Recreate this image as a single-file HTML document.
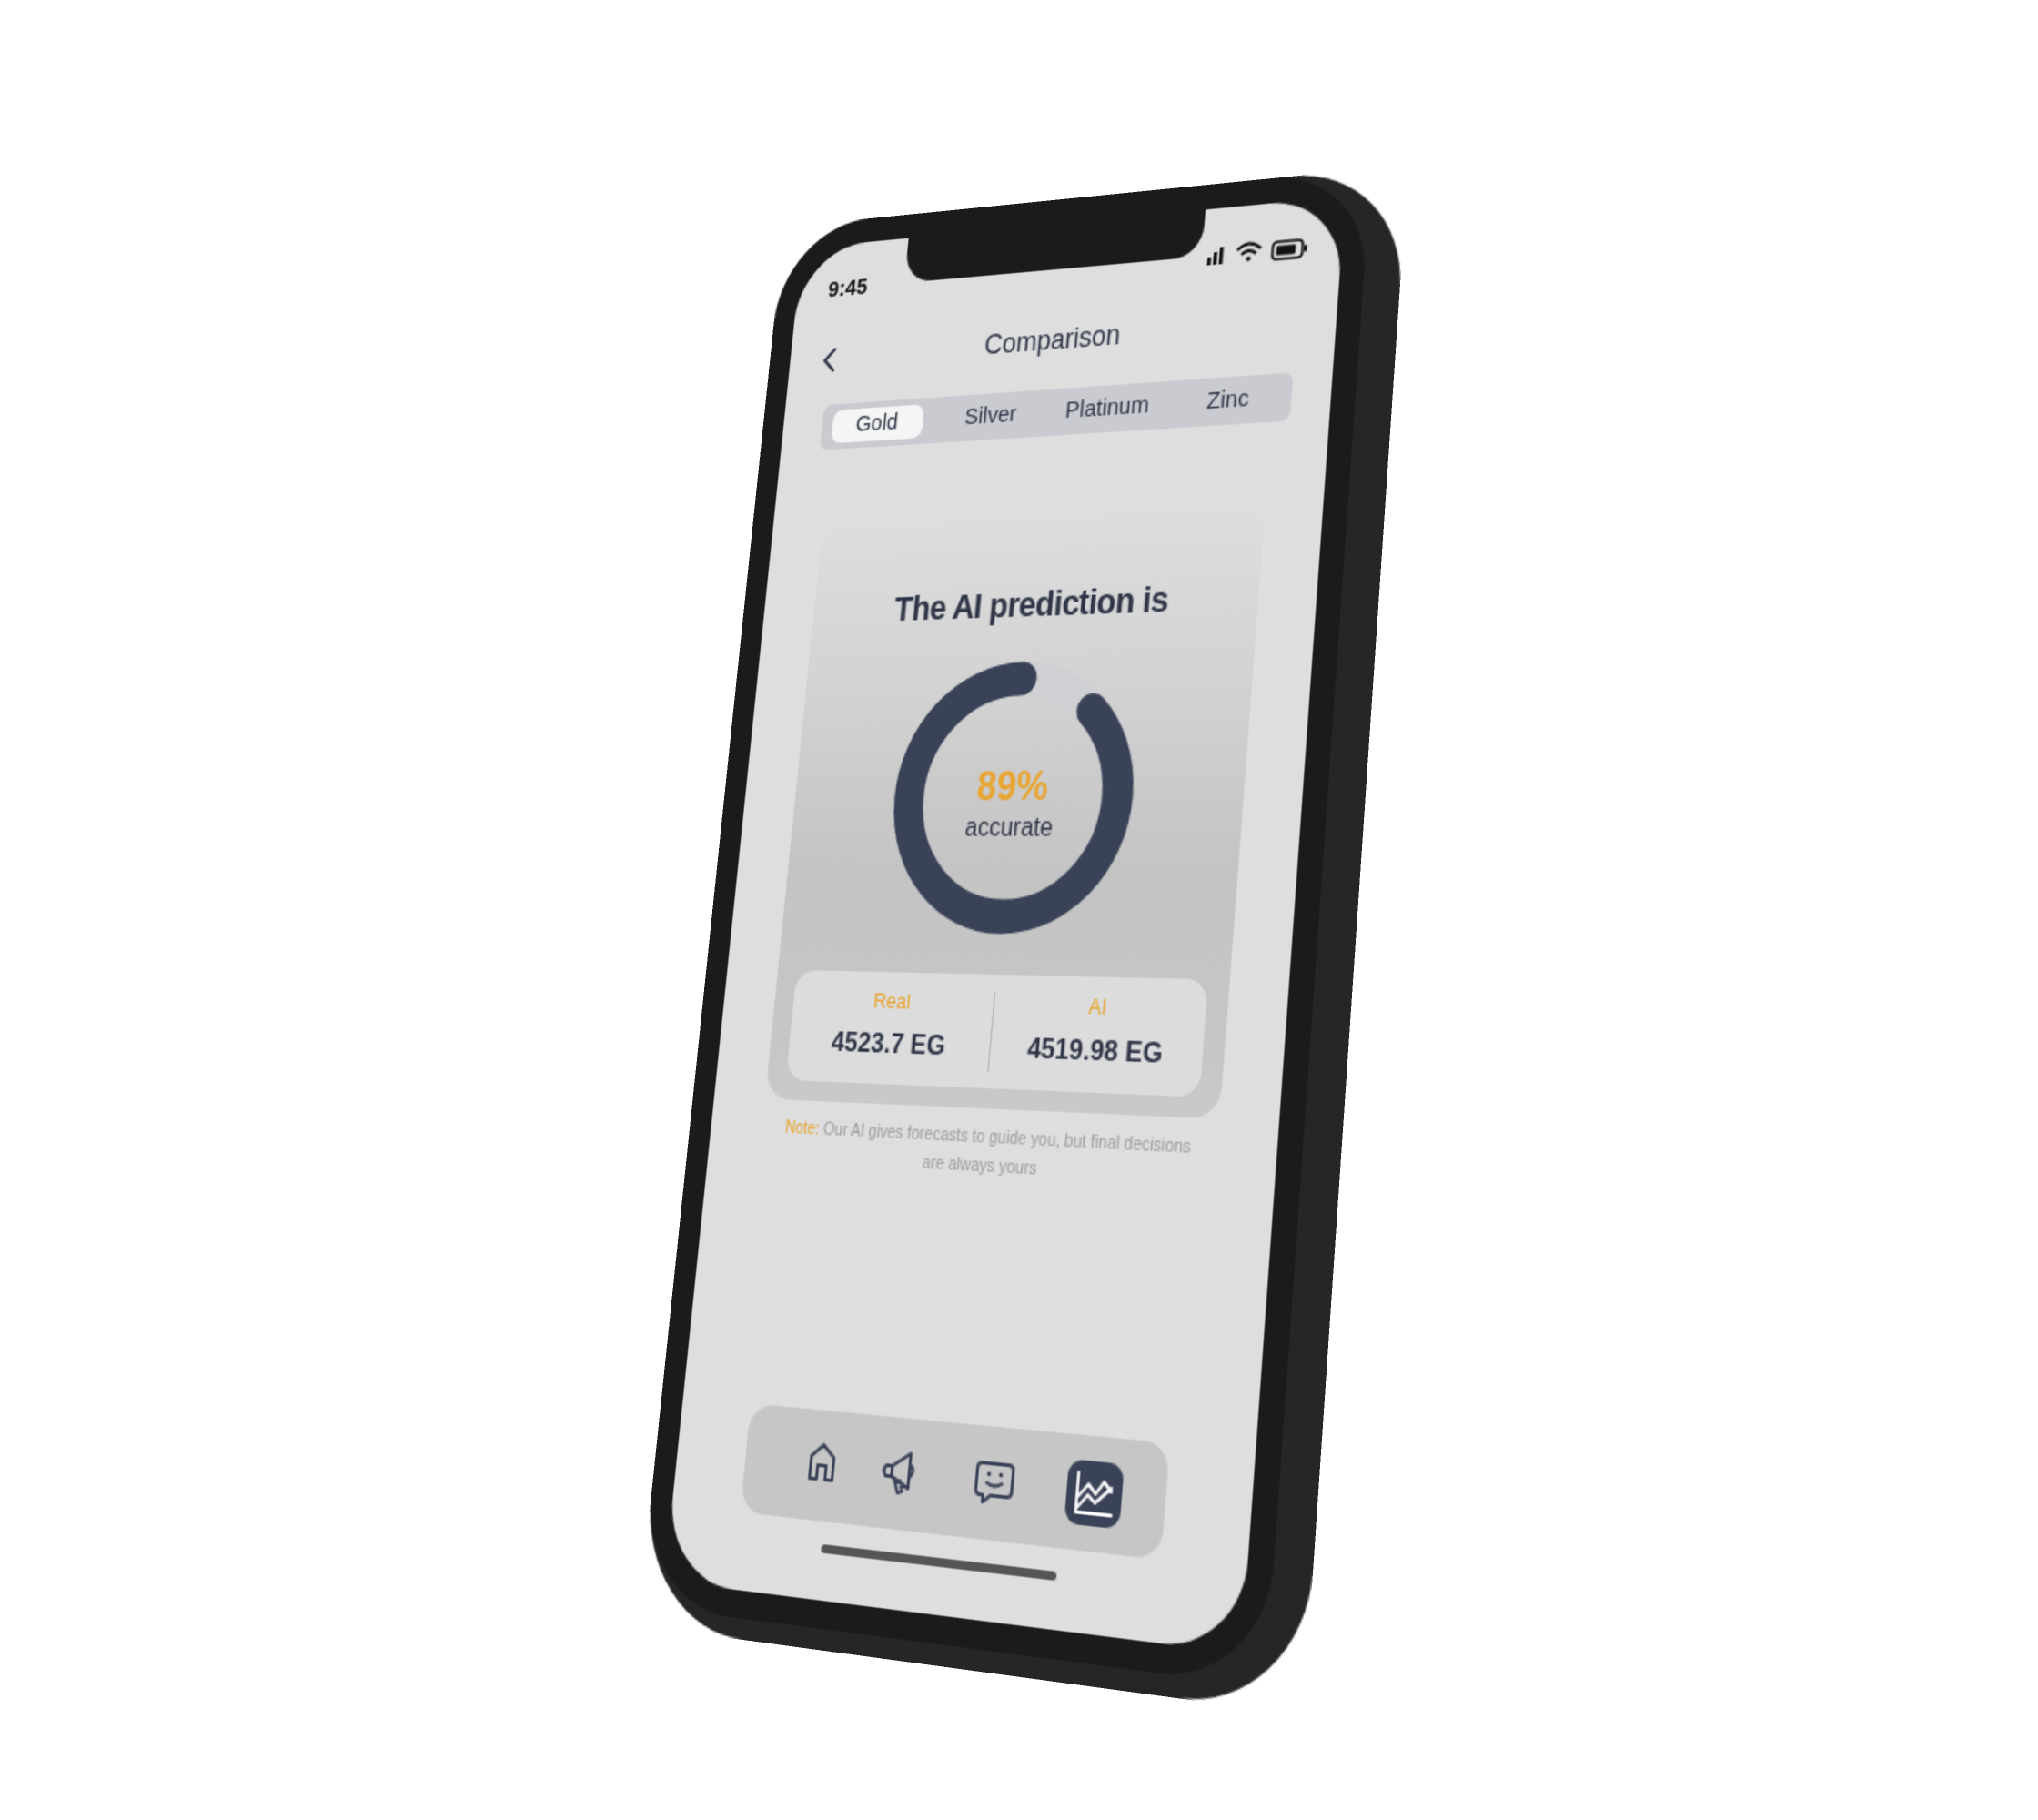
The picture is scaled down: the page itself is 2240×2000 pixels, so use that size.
<!DOCTYPE html>
<html><head><meta charset="utf-8">
<style>
html,body{margin:0;padding:0;background:#fff;}
body{width:2240px;height:2000px;overflow:hidden;position:relative;font-family:"Liberation Sans",sans-serif;}
#phone{position:absolute;left:0;top:0;width:390px;height:844px;transform-origin:0 0;
transform:matrix3d(1.22031,-0.192026,0,-0.00021031,-0.242761,1.584028,0,-0.000086813,0,0,1,0,881.4,272.9,0,1);}
.abs{position:absolute;}
#depth{left:-16px;top:-16px;width:446px;height:888px;border-radius:76px;background:#262626;}
#bezel{left:-16px;top:-16px;width:422px;height:876px;border-radius:66px;background:#1b1b1b;}
#screen{left:0;top:0;width:390px;height:844px;border-radius:50px;background:#dedede;overflow:hidden;}
#notch{left:82px;top:-2px;width:214px;height:32px;background:#1b1b1b;border-radius:0 0 20px 20px;}
.t{color:#2f3547;white-space:nowrap;}
#tabs{left:30px;top:108px;width:334px;height:30px;background:#c9cbd1;border-radius:6px;}
.tab{position:absolute;top:0;height:30px;line-height:30px;width:83px;text-align:center;font-size:15px;color:#2f3547;}
#pill{left:8px;top:4px;width:68px;height:22px;background:#f5f5f5;border-radius:7px;}
#card{left:38px;top:190px;width:314px;height:362px;border-radius:18px;
background:linear-gradient(#dddddd 0%,#d2d2d2 30%,#c4c4c4 60%,#c5c5c5 85%,#c9c9c9 100%);}
#stats{left:14px;top:282px;width:286px;height:68px;border-radius:14px;background:#dcdcdc;}
</style></head><body>
<div id="phone">
 <div id="depth" class="abs"></div>
 <div id="bezel" class="abs"></div>
 <div id="screen" class="abs">
  <div class="abs t" style="left:24px;top:22px;font-size:15px;font-weight:bold;color:#111;">9:45</div>
  <svg class="abs" style="left:298px;top:20px" width="80" height="20" viewBox="0 0 80 20">
   <rect x="2" y="11" width="2.5" height="5" fill="#111"/><rect x="6" y="8" width="2.5" height="8" fill="#111"/><rect x="10" y="5" width="2.5" height="11" fill="#111"/>
   <path d="M22 8 Q30 1 38 8 M25 11 Q30 7 35 11" stroke="#111" stroke-width="2" fill="none"/><circle cx="30" cy="14" r="1.6" fill="#111"/>
   <rect x="46" y="5" width="20" height="11" rx="3" stroke="#111" stroke-width="1.5" fill="none"/><rect x="48.5" y="7.5" width="13" height="6" rx="1" fill="#111"/><rect x="67" y="8.5" width="2" height="4" fill="#111"/>
  </svg>
  <svg class="abs" style="left:24px;top:68px" width="14" height="20" viewBox="0 0 14 20"><path d="M10 3 L3 10 L10 17" stroke="#2f3547" stroke-width="2" fill="none" stroke-linecap="round"/></svg>
  <div class="abs t" style="left:0;width:390px;text-align:center;top:66px;font-size:18px;">Comparison</div>
  <div id="tabs" class="abs">
   <div id="pill" class="abs"></div>
   <div class="tab" style="left:0">Gold</div>
   <div class="tab" style="left:84px">Silver</div>
   <div class="tab" style="left:167px">Platinum</div>
   <div class="tab" style="left:250px">Zinc</div>
  </div>
  <div id="card" class="abs">
   <div class="abs t" style="left:0;width:314px;text-align:center;top:42px;font-size:22px;font-weight:bold;letter-spacing:-0.5px;">The AI prediction is</div>
   <svg class="abs" style="left:67px;top:84px" width="180" height="180" viewBox="0 0 180 180">
    <circle cx="90" cy="90" r="73" stroke="#cfd0d3" stroke-width="21" fill="none"/>
    <circle cx="90" cy="90" r="73" stroke="#3a4257" stroke-width="21" fill="none" stroke-dasharray="402 1000" stroke-linecap="round" transform="rotate(-46 90 90)"/>
    <text x="90" y="92" text-anchor="middle" font-family="Liberation Sans" font-weight="bold" font-size="25" fill="#e8a530">89%</text>
    <text x="90" y="114" text-anchor="middle" font-family="Liberation Sans" font-size="16" fill="#2f3547">accurate</text>
   </svg>
   <div id="stats" class="abs">
    <div class="abs" style="left:143px;top:10px;width:1px;height:48px;background:#b9b9b9"></div>
    <div class="abs" style="left:0;width:143px;text-align:center;top:10px;font-size:13px;color:#e8a530">Real</div>
    <div class="abs t" style="left:0;width:143px;text-align:center;top:34px;font-size:17px;font-weight:bold">4523.7 EG</div>
    <div class="abs" style="left:143px;width:143px;text-align:center;top:10px;font-size:13px;color:#e8a530">AI</div>
    <div class="abs t" style="left:143px;width:143px;text-align:center;top:34px;font-size:17px;font-weight:bold">4519.98 EG</div>
   </div>
  </div>
  <div class="abs" style="left:20px;width:350px;text-align:center;top:561px;font-size:10.5px;line-height:17px;color:#9c9c9c"><span style="color:#e8a530">Note:</span> Our AI gives forecasts to guide you, but final decisions<br>are always yours</div>
  <div class="abs" style="left:50px;top:735px;width:286px;height:64px;border-radius:16px;background:#c6c6c6;">
   <svg class="abs" style="left:0;top:0" width="294" height="64" viewBox="0 0 294 64">
    <g stroke="#3a4257" stroke-width="2" fill="none" stroke-linejoin="round" stroke-linecap="round">
     <path d="M47 40 V27 L55 20 L63 27 V40 H58 V32 H52 V40 Z"/>
     <path d="M104 28 L116 20 V40 L104 34 Z M104 28 H100 Q97 31 100 34 H104 M106 35 L109 43 L112 42 L110 36 M116 26 Q121 30 116 34"/>
     <path d="M165 21 H183 Q186 21 186 24 V36 Q186 39 183 39 H172 L167 43 V39 H165 Q162 39 162 36 V24 Q162 21 165 21 Z M169 32 Q174 35 179 32"/>
    </g>
    <circle cx="170" cy="27" r="1.3" fill="#3a4257"/><circle cx="178" cy="27" r="1.3" fill="#3a4257"/>
    <rect x="222" y="14" width="36" height="36" rx="9" fill="#3a4257"/>
    <path d="M229 21 V43 H252 M230 34 L236 27 L241 32 L246 25 L251 30 M230 40 L236 33 L241 37 L251 28" stroke="#fff" stroke-width="1.8" fill="none" stroke-linejoin="round" stroke-linecap="round"/>
   </svg>
  </div>
  <div class="abs" style="left:110px;top:812px;width:160px;height:5px;border-radius:3px;background:#555"></div>
 </div>
 <div id="notch" class="abs"></div>
</div>
</body></html>
